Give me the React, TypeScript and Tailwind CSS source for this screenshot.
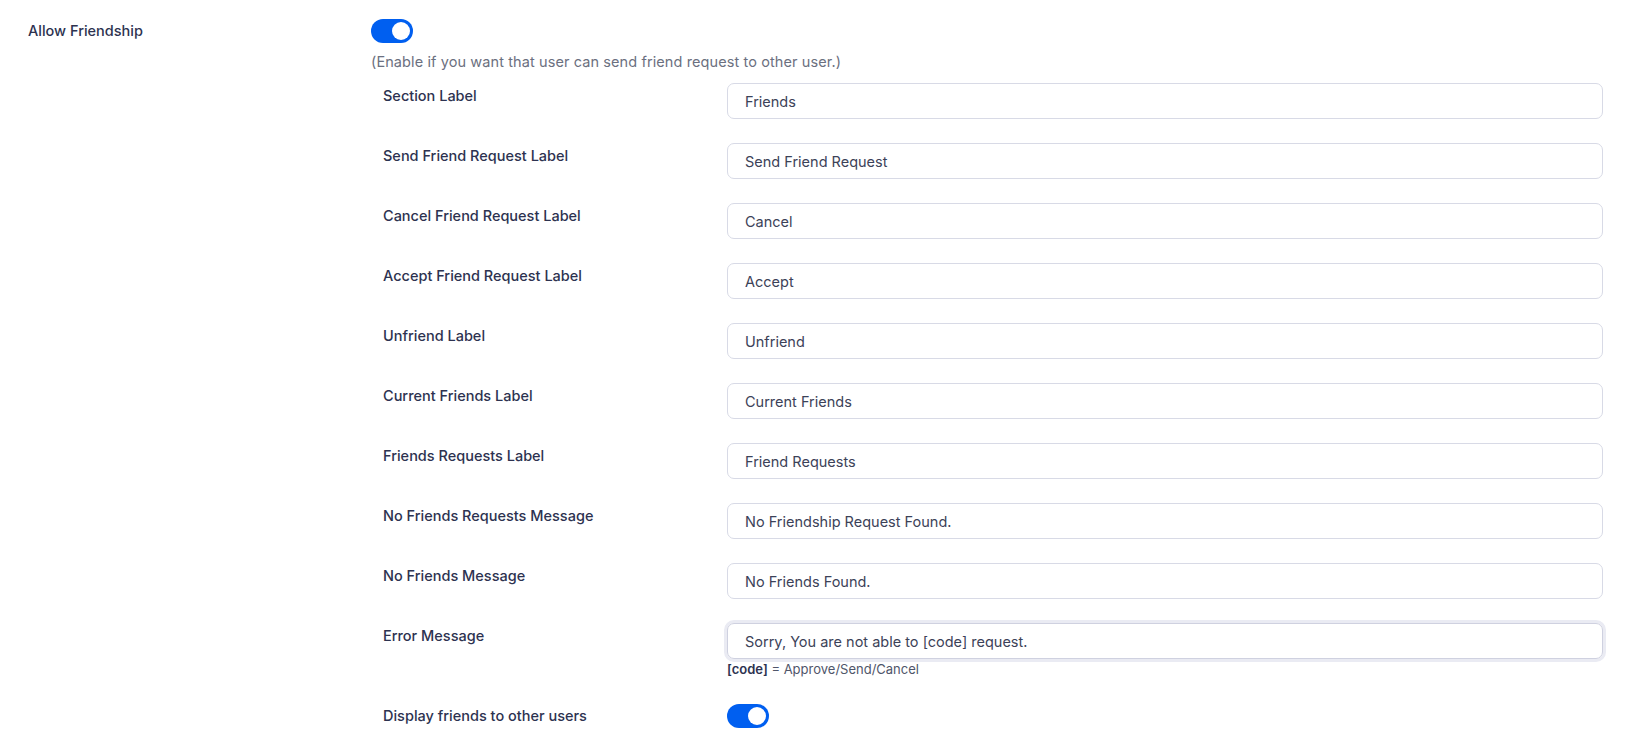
import { useState } from "react";

// Friendship settings panel: one top-level toggle, then a block of text
// fields indented under it, each a label + full-width input.

const FIELDS: { label: string; value: string }[] = [
  { label: "Section Label", value: "Friends" },
  { label: "Send Friend Request Label", value: "Send Friend Request" },
  { label: "Cancel Friend Request Label", value: "Cancel" },
  { label: "Accept Friend Request Label", value: "Accept" },
  { label: "Unfriend Label", value: "Unfriend" },
  { label: "Current Friends Label", value: "Current Friends" },
  { label: "Friends Requests Label", value: "Friend Requests" },
  { label: "No Friends Requests Message", value: "No Friendship Request Found." },
  { label: "No Friends Message", value: "No Friends Found." },
];

const LABEL = "w-[344px] shrink-0 text-[14.5px] font-medium leading-[22px] text-[#2d3250]";

function Toggle({ on, onChange }: { on: boolean; onChange: (v: boolean) => void }) {
  return (
    <button
      type="button"
      onClick={() => onChange(!on)}
      className={
        on
          ? "flex h-[24px] w-[42px] shrink-0 items-center justify-end rounded-full bg-[#005ff0] px-[3px]"
          : "flex h-[24px] w-[42px] shrink-0 items-center justify-start rounded-full bg-[#c3c4c7] px-[3px]"
      }
    >
      <span className="h-[18px] w-[18px] rounded-full bg-white" />
    </button>
  );
}

function Field({ label, value }: { label: string; value: string }) {
  const [v, setV] = useState(value);
  return (
    <div className="flex items-start">
      <div className={LABEL + " pt-[2px]"}>{label}</div>
      <input
        value={v}
        onChange={(e) => setV(e.target.value)}
        className="h-[36px] flex-1 rounded-[7px] border border-[#d8dae6] px-[17px] text-[14.5px] text-[#3c4258] outline-none"
      />
    </div>
  );
}

export default function App() {
  const [allow, setAllow] = useState(true);
  const [display, setDisplay] = useState(true);
  const [err, setErr] = useState("Sorry, You are not able to [code] request.");

  return (
    <div
      className="min-h-[755px] bg-white pl-[28px] pr-[22px] pt-[19px]"
      style={{ fontFamily: "Inter, 'Open Sans', sans-serif" }}
    >
      <div className="flex items-start">
        <div className="flex h-[24px] w-[343px] shrink-0 items-center text-[14.5px] font-medium leading-[22px] text-[#2d3250]">
          Allow Friendship
        </div>
        <div className="flex flex-1 flex-col">
          <Toggle on={allow} onChange={setAllow} />
          <p className="mt-[8px] text-[14.5px] leading-[22px] tracking-[0.1px] text-[#6b7080]">
            (Enable if you want that user can send friend request to other user.)
          </p>

          <div className="mt-[10px] flex flex-col gap-[24px] pl-[12px]">
            {FIELDS.map((f) => (
              <Field key={f.label} label={f.label} value={f.value} />
            ))}

            <div className="flex items-start">
              <div className={LABEL + " pt-[2px]"}>Error Message</div>
              <div className="flex flex-1 flex-col">
                <input
                  value={err}
                  onChange={(e) => setErr(e.target.value)}
                  className="h-[36px] rounded-[7px] border border-[#cfd1e0] px-[17px] text-[14.5px] text-[#3c4258] shadow-[0_0_0_3px_#eaebf3] outline-none"
                />
                <p className="mt-[2px] text-[13px] leading-[16px] text-[#50566a]">
                  <span className="font-semibold text-[#2d3250]">[code]</span> = Approve/Send/Cancel
                </p>
              </div>
            </div>

            <div className="mt-[3px] flex items-center">
              <div className={LABEL}>Display friends to other users</div>
              <Toggle on={display} onChange={setDisplay} />
            </div>
          </div>
        </div>
      </div>
    </div>
  );
}
